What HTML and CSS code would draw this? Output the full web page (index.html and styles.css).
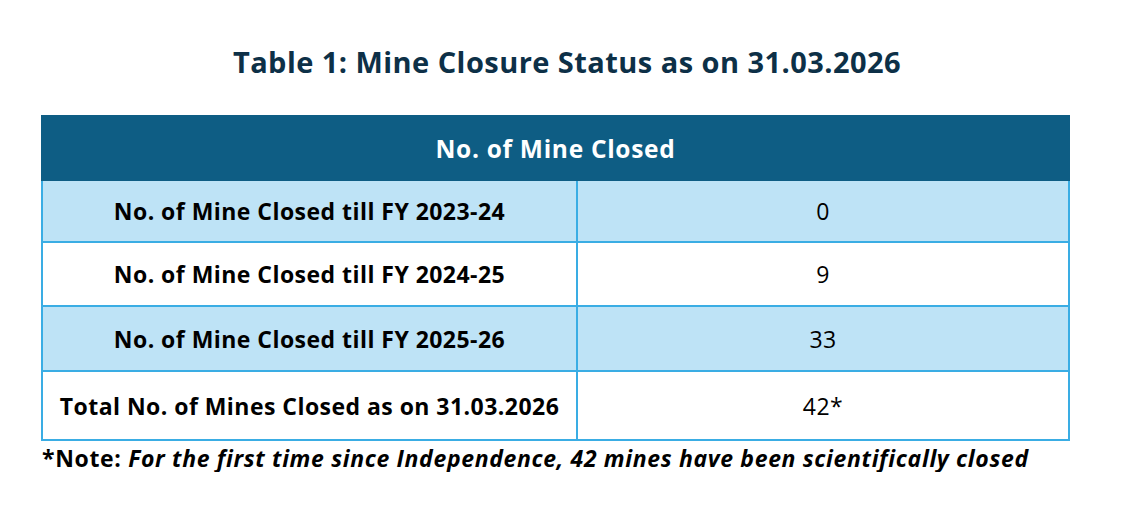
FILE: index.html
```html
<!DOCTYPE html>
<html lang="en">
<head>
<meta charset="utf-8">
<title>Mine Closure Status</title>
<link rel="stylesheet" href="styles.css">
</head>
<body>
<main class="page">
  <h1 class="title">Table 1: Mine Closure Status as on 31.03.2026</h1>
  <table class="status">
    <colgroup><col class="c1"><col class="c2"></colgroup>
    <thead>
      <tr><th colspan="2">No. of Mine Closed</th></tr>
    </thead>
    <tbody>
      <tr class="alt r1"><td class="lbl">No. of Mine Closed till FY 2023-24</td><td class="val">0</td></tr>
      <tr class="r2"><td class="lbl">No. of Mine Closed till FY 2024-25</td><td class="val">9</td></tr>
      <tr class="alt r3"><td class="lbl">No. of Mine Closed till FY 2025-26</td><td class="val">33</td></tr>
      <tr class="r4"><td class="lbl">Total No. of Mines Closed as on 31.03.2026</td><td class="val">42*</td></tr>
    </tbody>
  </table>
  <p class="note">*Note: <em>For the first time since Independence, 42 mines have been scientifically closed</em></p>
</main>
</body>
</html>
```

FILE: styles.css
```css
html, body {
  margin: 0;
  padding: 0;
  background: #ffffff;
}

body {
  font-family: "Open Sans", Lato, sans-serif;
  color: #000000;
}

.page {
  padding: 43px 0 0 41px;
  width: 1029px;
}

.title {
  margin: 0 0 35px 0;
  padding-left: 23px;
  height: 37px;
  line-height: 37px;
  font-size: 29px;
  letter-spacing: 0.45px;
  font-weight: 700;
  text-align: center;
  color: #0d3047;
}

.status {
  width: 1029px;
  table-layout: fixed;
  border-collapse: separate;
  border-spacing: 0;
}

.c1 { width: 537px; }
.c2 { width: 492px; }

.status th {
  height: 66px;
  padding: 0;
  background: #0e5d84;
  color: #ffffff;
  font-size: 24.5px;
  letter-spacing: 0.7px;
  font-weight: 700;
  text-align: center;
  vertical-align: middle;
}

.status td {
  padding: 0;
  text-align: center;
  vertical-align: middle;
  border-bottom: 2px solid #3aade4;
  border-right: 2px solid #3aade4;
  font-size: 23px;
  letter-spacing: 0.46px;
}

.status td.lbl {
  border-left: 2px solid #3aade4;
  font-weight: 700;
}

.status td.val {
  font-weight: 400;
}

.alt td { background: #bee3f6; }

.r1 td { height: 60px; }
.r2 td { height: 62px; }
.r3 td { height: 63px; }
.r4 td { height: 67px; }

.note {
  margin: 3px 0 0 1px;
  font-size: 23px;
  letter-spacing: 0.65px;
  font-weight: 700;
  line-height: 28px;
  white-space: nowrap;
}

.note em {
  font-style: italic;
}
```
